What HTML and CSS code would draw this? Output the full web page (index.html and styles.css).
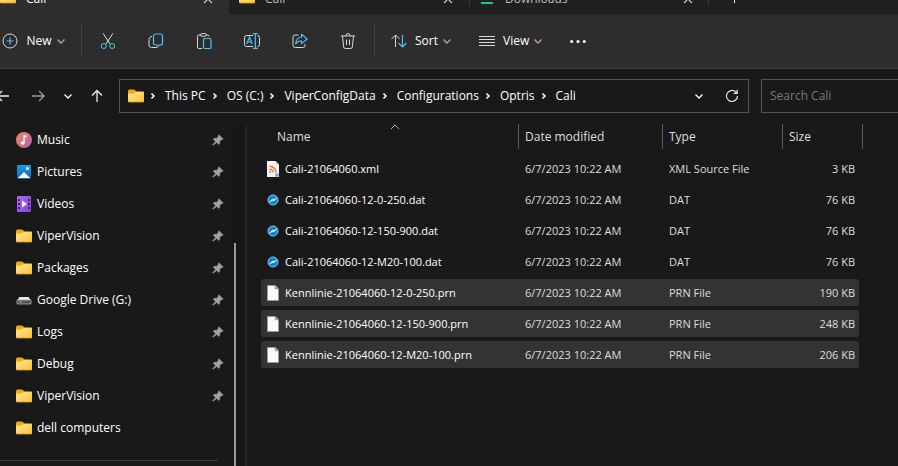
FILE: index.html
```html
<!DOCTYPE html>
<html lang="en">
<head>
<meta charset="utf-8">
<title>Cali</title>
<link rel="stylesheet" href="styles.css">
</head>
<body>
<svg class="sprite" aria-hidden="true">
  <defs>
    <linearGradient id="g-folder" x1="0" y1="0" x2="1" y2="1"><stop offset="0" stop-color="#ffe59a"/><stop offset="1" stop-color="#fdc433"/></linearGradient>
    <linearGradient id="g-music" x1="0" y1="0" x2="1" y2="1"><stop offset="0" stop-color="#f58a56"/><stop offset="1" stop-color="#a960b8"/></linearGradient>
    <linearGradient id="g-pic" x1="0" y1="0" x2="0" y2="1"><stop offset="0" stop-color="#1e9be6"/><stop offset="1" stop-color="#0867b8"/></linearGradient>
    <linearGradient id="g-video" x1="0" y1="0" x2="1" y2="1"><stop offset="0" stop-color="#b565f0"/><stop offset="1" stop-color="#7d45dc"/></linearGradient>
    <symbol id="folder" viewBox="0 0 16 16">
      <path d="M0 3q0-1.500 1.500-1.500h4.500l2 1.500v4H0z" fill="#f5a908"/>
      <path d="M0 5.500h6L8 3.500h7q1 0 1 1V13q0 1-1 1H1q-1 0-1-1z" fill="url(#g-folder)"/>
      <path d="M0 13q0 1 1 1h14q1 0 1-1" fill="none" stroke="#dda020" stroke-width=".8"/>
    </symbol>
    <symbol id="chev-down" viewBox="0 0 10 10"><path d="M1.500 3.500 5 7l3.500-3.500" fill="none" stroke="currentColor" stroke-width="1.300"/></symbol>
    <symbol id="chev-right" viewBox="0 0 6 10"><path d="M1.500 2.500 4 5 1.500 7.500" fill="none" stroke="currentColor" stroke-width="1.600"/></symbol>
    <symbol id="close" viewBox="0 0 10 10"><path d="m1 1 8 8M9 1 1 9" stroke="currentColor" stroke-width="1.200"/></symbol>
    <symbol id="pin" viewBox="0 0 12 12"><path d="M7 .8 11.200 5l-1 .8-.8-.1-1.800 1.800.1 2.100-1 1L4.500 8.400 1.200 11.300l-.6-.6 2.900-3.200L1.300 5.300l1-1 2.100.1 1.800-1.800-.1-.8z" fill="#98a3aa" stroke="#98a3aa" stroke-width=".5"/></symbol>
    <symbol id="page" viewBox="0 0 12 16"><path d="M.5.5h7.800l3.200 3.200v11.800H.5z" fill="#fafafa" stroke="#9b9b9b"/><path d="M8.300.5v3.200h3.200z" fill="#ddd" stroke="#777" stroke-width=".8"/></symbol>
    <symbol id="dat" viewBox="0 0 12 12"><circle cx="6" cy="6" r="5" fill="#0c83cf" stroke="#8bc9ee"/><path d="m2.500 8 3.200-3 .8.800L9.500 4 6.600 7.100l-.9-.8z" fill="#fff" stroke="#fff" stroke-width=".6"/></symbol>
  </defs>
</svg>

<header class="tabs">
  <div class="tab tab-active"><svg class="i16"><use href="#folder"/></svg><span>Cali</span><button class="close" aria-label="Close Cali"><svg class="i10"><use href="#close"/></svg></button></div>
  <div class="tab tab-round"><svg class="i16"><use href="#folder"/></svg><span>Cali</span><button class="close" aria-label="Close Cali"><svg class="i10"><use href="#close"/></svg></button></div>
  <div class="tab tab-split"><svg class="i16" viewBox="0 0 16 16"><path d="M6 0h4v5h4l-6 6-6-6h4z" fill="#14a596"/><path d="M2 14h12" stroke="#1fc596" stroke-width="2"/></svg><span>Downloads</span><button class="close" aria-label="Close Downloads"><svg class="i10"><use href="#close"/></svg></button></div>
  <button class="new-tab" aria-label="New tab"><svg class="i12" viewBox="0 0 12 12"><path d="M6.500 0v12M0 6.500h12" stroke="currentColor"/></svg></button>
</header>

<div class="toolbar" role="toolbar">
  <button class="labelled new"><svg class="i16" viewBox="0 0 16 16" fill="none"><circle cx="8" cy="8" r="7" stroke="#d8d8d8"/><path d="M8 4.500v7M4.500 8h7" stroke="#4cc2ff" stroke-width="1.200"/></svg><span>New</span><svg class="i10 dim"><use href="#chev-down"/></svg></button>
  <span class="rule"></span>
  <button class="tool" aria-label="Cut"><svg class="i16" viewBox="0 0 16 16" fill="none"><path d="m3 .3 7.300 11M13 .3 5.700 11.300" stroke="#d8d8d8"/><circle cx="3.800" cy="13" r="2.500" stroke="#4cc2ff"/><circle cx="12.200" cy="13" r="2.500" stroke="#4cc2ff"/></svg></button>
  <button class="tool" aria-label="Copy"><svg class="i16" viewBox="0 0 16 16" fill="none"><path d="M4 3.500H3q-2 1-2 3V12q0 2.500 2.500 2.500H8q2 0 3-2" stroke="#d8d8d8"/><rect x="5.500" y="1" width="9" height="11" rx="2" stroke="#4cc2ff" stroke-width="1.200"/></svg></button>
  <button class="tool" aria-label="Paste"><svg class="i16" viewBox="0 0 16 16" fill="none"><path d="M4.500 2H2.700q-1.200 0-1.200 1.200v11.100q0 1.200 1.200 1.200H6M10.500 2h1.300Q13 2 13 3.500" stroke="#d8d8d8"/><rect x="4.500" y=".6" width="6" height="2.600" rx="1.300" stroke="#d8d8d8"/><rect x="7.500" y="5.500" width="7.500" height="10" rx="1.200" stroke="#4cc2ff" stroke-width="1.200"/></svg></button>
  <button class="tool" aria-label="Rename"><svg class="i16" viewBox="0 0 16 16" fill="none"><path d="M9 2.500H2.500q-2 0-2 2v7q0 2 2 2H9M13.500 2.500q2 0 2 2v7q0 2-2 2" stroke="#d8d8d8"/><path d="m2.700 11 2.800-6.800L8.300 11M3.700 9h3.600M8.800.6h5M8.800 15.400h5M11.300.6v14.800" stroke="#4cc2ff" stroke-width="1.200"/></svg></button>
  <button class="tool" aria-label="Share"><svg class="i16" viewBox="0 0 16 16" fill="none"><path d="M6.500 2H3.200Q1 2 1 4.200v8.100q0 2.200 2.200 2.200h7.600q2.200 0 2.200-2.200V11" stroke="#d8d8d8"/><path d="M9.500 1.200 15.200 6l-5.700 4.700V8Q6 7.500 3.700 11 4 4.500 9.500 4z" stroke="#4cc2ff" stroke-width="1.100" stroke-linejoin="round"/></svg></button>
  <button class="tool" aria-label="Delete"><svg class="i16" viewBox="0 0 16 16" fill="none" stroke="#d8d8d8"><path d="M.8 3h14.400M2.500 3l1.200 11q.2 1.500 1.600 1.500h5.400q1.400 0 1.600-1.500l1.200-11M5.700 3Q5.700.6 8 .6T10.300 3M6.500 6.500v5.500M9.500 6.500v5.500"/></svg></button>
  <span class="rule"></span>
  <button class="labelled sort"><svg class="i16" viewBox="0 0 16 16" fill="none"><path d="M4.500 14V2M.5 6l4-4 4 4" stroke="#d8d8d8"/><path d="M11.500 2v12M7.500 10l4 4 4-4" stroke="#4cc2ff" stroke-width="1.200"/></svg><span>Sort</span><svg class="i10 dim"><use href="#chev-down"/></svg></button>
  <button class="labelled view"><svg class="i16" viewBox="0 0 16 16"><path d="M0 3.500h16M0 6.500h16M0 9.500h16M0 12.500h16" stroke="#d8d8d8"/></svg><span>View</span><svg class="i10 dim"><use href="#chev-down"/></svg></button>
  <button class="more" aria-label="See more"><svg class="i16" viewBox="0 0 16 16" fill="#fff"><circle cx="1.700" cy="8.500" r="1.500"/><circle cx="8" cy="8.500" r="1.500"/><circle cx="14.300" cy="8.500" r="1.500"/></svg></button>
</div>

<nav class="location">
  <div class="history">
    <button class="back" aria-label="Back"><svg class="i14" viewBox="0 0 14 14"><path d="M13 7H1M6 2 1 7l5 5" fill="none" stroke="#eee" stroke-width="1.300"/></svg></button>
    <button class="forward" aria-label="Forward"><svg class="i14" viewBox="0 0 14 14"><path d="M1 7h12M8 2l5 5-5 5" fill="none" stroke="#999" stroke-width="1.300"/></svg></button>
    <button class="recent" aria-label="Recent locations"><svg class="i10"><use href="#chev-down"/></svg></button>
    <button class="up" aria-label="Up"><svg class="i14" viewBox="0 0 14 14"><path d="M7 13V1.500M2 6.500l5-5 5 5" fill="none" stroke="#eee" stroke-width="1.300"/></svg></button>
  </div>
  <div class="address">
    <svg class="i16"><use href="#folder"/></svg>
    <ol class="crumbs">
      <li><svg class="sep"><use href="#chev-right"/></svg><a href="#">This PC</a></li>
      <li><svg class="sep"><use href="#chev-right"/></svg><a href="#">OS (C:)</a></li>
      <li><svg class="sep"><use href="#chev-right"/></svg><a href="#">ViperConfigData</a></li>
      <li><svg class="sep"><use href="#chev-right"/></svg><a href="#">Configurations</a></li>
      <li><svg class="sep"><use href="#chev-right"/></svg><a href="#">Optris</a></li>
      <li><svg class="sep"><use href="#chev-right"/></svg><a href="#">Cali</a></li>
    </ol>
    <button class="addr-btn" aria-label="Previous locations"><svg class="i10"><use href="#chev-down"/></svg></button>
    <button class="addr-btn" aria-label="Refresh"><svg class="i14" viewBox="0 0 14 14" fill="none" stroke="#e6e6e6" stroke-width="1.200"><path d="M12.500 7A5.500 5.500 0 1 1 10.800 3L12 4.200M12.200.8v3.600H8.600"/></svg></button>
  </div>
  <div class="search">
    <input type="search" placeholder="Search Cali" aria-label="Search Cali">
    <svg class="i12" viewBox="0 0 12 12" fill="none" stroke="#ddd"><circle cx="7" cy="5" r="4"/><path d="M4 8 .5 11.500"/></svg>
  </div>
</nav>

<div class="body">
  <aside class="sidebar">
    <ul class="places">
      <li><svg class="i16" viewBox="0 0 16 16"><circle cx="8" cy="8" r="8" fill="url(#g-music)"/><ellipse cx="6.600" cy="11" rx="2" ry="1.700" fill="#fff"/><path d="M7.500 11V3.200h3v2H8.700V11z" fill="#fff"/></svg><a href="#">Music</a><svg class="pin"><use href="#pin"/></svg></li>
      <li><svg class="i16" viewBox="0 0 16 16"><rect x="1" y="1" width="14" height="14" rx="1" fill="url(#g-pic)"/><path d="M2 14l6-6 6 6z" fill="#fff"/><circle cx="11.500" cy="4.500" r="1.500" fill="#dff1ff"/></svg><a href="#">Pictures</a><svg class="pin"><use href="#pin"/></svg></li>
      <li><svg class="i16" viewBox="0 0 16 16"><rect x="1" width="14" height="16" rx="1" fill="url(#g-video)"/><path d="M2 3h2v2H2zm0 4h2v2H2zm0 4h2v2H2zm10-8h2v2h-2zm0 4h2v2h-2zm0 4h2v2h-2z" fill="#3d2470"/><path d="m6 4.500 5 3.500-5 3.500z" fill="#fff"/></svg><a href="#">Videos</a><svg class="pin"><use href="#pin"/></svg></li>
      <li><svg class="i16"><use href="#folder"/></svg><a href="#">ViperVision</a><svg class="pin"><use href="#pin"/></svg></li>
      <li><svg class="i16"><use href="#folder"/></svg><a href="#">Packages</a><svg class="pin"><use href="#pin"/></svg></li>
      <li><svg class="i16" viewBox="0 0 16 16"><path d="M3.500 5h9L15 8.500H1z" fill="#e8e8e8"/><path d="M1 8h14v4H1z" fill="#555" stroke="#aaa" stroke-width=".8"/><path d="M3.500 10h2" stroke="#4be04b" stroke-width="1.500"/></svg><a href="#">Google Drive (G:)</a><svg class="pin"><use href="#pin"/></svg></li>
      <li><svg class="i16"><use href="#folder"/></svg><a href="#">Logs</a><svg class="pin"><use href="#pin"/></svg></li>
      <li><svg class="i16"><use href="#folder"/></svg><a href="#">Debug</a><svg class="pin"><use href="#pin"/></svg></li>
      <li><svg class="i16"><use href="#folder"/></svg><a href="#">ViperVision</a><svg class="pin"><use href="#pin"/></svg></li>
      <li><svg class="i16"><use href="#folder"/></svg><a href="#">dell computers</a></li>
    </ul>
    <div class="track"><div class="thumb"></div></div>
  </aside>
  <main class="files">
    <table>
      <colgroup><col><col class="c-date"><col class="c-type"><col class="c-size"></colgroup>
      <thead>
        <tr>
          <th><button class="name-head">Name<svg class="asc" viewBox="0 0 10 6"><path d="M1 5l4-4 4 4" fill="none" stroke="#aaa"/></svg></button></th>
          <th><button>Date modified</button></th>
          <th><button>Type</button></th>
          <th><button class="size-head">Size</button></th>
        </tr>
      </thead>
      <tbody>
        <tr><td><div class="name"><svg class="file" viewBox="0 0 12 16"><path d="M0 0h8.500L12 3.500V16H0z" fill="#f6f4f2"/><path d="M8.500 0v3.500H12z" fill="#ccc"/><g fill="none" stroke="#d97a45" stroke-width="1.400"><path d="M2.500 5.200q6 .3 6.500 6.300M2.500 8q3.400.3 3.700 3.500"/></g><circle cx="3.200" cy="10.800" r="1" fill="#d97a45"/><circle cx="10" cy="14" r="2" fill="#79a9e8"/></svg>Cali-21064060.xml</div></td><td>6/7/2023 10:22 AM</td><td>XML Source File</td><td>3 KB</td></tr>
        <tr><td><div class="name"><svg class="i12"><use href="#dat"/></svg>Cali-21064060-12-0-250.dat</div></td><td>6/7/2023 10:22 AM</td><td>DAT</td><td>76 KB</td></tr>
        <tr><td><div class="name"><svg class="i12"><use href="#dat"/></svg>Cali-21064060-12-150-900.dat</div></td><td>6/7/2023 10:22 AM</td><td>DAT</td><td>76 KB</td></tr>
        <tr><td><div class="name"><svg class="i12"><use href="#dat"/></svg>Cali-21064060-12-M20-100.dat</div></td><td>6/7/2023 10:22 AM</td><td>DAT</td><td>76 KB</td></tr>
        <tr class="selected"><td><div class="name"><svg class="file"><use href="#page"/></svg>Kennlinie-21064060-12-0-250.prn</div></td><td>6/7/2023 10:22 AM</td><td>PRN File</td><td>190 KB</td></tr>
        <tr class="selected"><td><div class="name"><svg class="file"><use href="#page"/></svg>Kennlinie-21064060-12-150-900.prn</div></td><td>6/7/2023 10:22 AM</td><td>PRN File</td><td>248 KB</td></tr>
        <tr class="selected"><td><div class="name"><svg class="file"><use href="#page"/></svg>Kennlinie-21064060-12-M20-100.prn</div></td><td>6/7/2023 10:22 AM</td><td>PRN File</td><td>206 KB</td></tr>
      </tbody>
    </table>
  </main>
</div>
</body>
</html>
```
FILE: styles.css
```css
* { box-sizing: border-box; }
body {
  margin: 0;
  height: 100vh;
  display: flex;
  flex-direction: column;
  overflow: hidden;
  background: #191919;
  color: #fff;
  font: 12px/16px "Open Sans", "Noto Sans", sans-serif;
}
button {
  display: flex;
  align-items: center;
  justify-content: center;
  padding: 0;
  border: 0;
  background: none;
  color: inherit;
  font: inherit;
}
a { color: inherit; text-decoration: none; }
ul, ol { margin: 0; padding: 0; list-style: none; }
svg { display: block; flex: none; }
.sprite { position: absolute; width: 0; height: 0; }
.i16 { width: 16px; height: 16px; }
.i14 { width: 14px; height: 14px; }
.i12 { width: 12px; height: 12px; }
.i10 { width: 10px; height: 10px; }
.dim { color: #aaa; }

/* Tab strip, scrolled mostly out of view */
.tabs {
  flex: none;
  display: flex;
  align-items: flex-end;
  height: 14px;
  overflow: hidden;
  background: #2d2d2d;
}
.tab {
  flex: none;
  display: flex;
  align-items: center;
  gap: 10px;
  width: 240px;
  height: 30px;
  padding: 0 16px 0 10px;
  background: #202020;
  border-bottom: 1px solid #1c1c1c;
  color: #bbb;
}
.tab .i16 { margin-bottom: 4px; }
.tab-active {
  width: 229px;
  padding-left: 0;
  background: #2d2d2d;
  border-color: #2d2d2d;
  color: #fff;
}
.tab-round { border-bottom-left-radius: 4px; }
/* Short dividers that stop above the strip's lower edge */
.tab-split {
  background:
    linear-gradient(#3a3a3a, #3a3a3a) left top / 1px 22px no-repeat,
    linear-gradient(#3a3a3a, #3a3a3a) right top / 1px 22px no-repeat,
    #202020;
}
.close { margin-left: auto; color: #ccc; }
.new-tab {
  flex: 1;
  justify-content: flex-start;
  height: 30px;
  padding: 0 0 4px 19px;
  background: #202020;
  border-bottom: 1px solid #1c1c1c;
}

.toolbar {
  flex: none;
  display: flex;
  align-items: center;
  height: 55px;
  background: #2d2d2d;
  border-bottom: 1px solid #3c3c3c;
}
.labelled { gap: 8px; height: 32px; }
.labelled .dim { margin-left: -4px; }
.new { width: 68px; }
.tool { width: 48px; height: 32px; }
.rule { width: 1px; height: 32px; margin: 0 2px 0 13px; background: #444; }
.tool + .rule { margin: 0 16px 0 2px; }
.view { margin-left: 27px; }
.more { margin-left: 27px; }

.location {
  flex: none;
  display: flex;
  align-items: center;
  height: 55px;
  padding-bottom: 2px;
  overflow: hidden;
}
.history { display: flex; width: 119px; }
.back { margin-left: -4px; }
.forward { margin-left: 21px; }
.recent { margin-left: 18px; }
.up { margin-left: 17px; }
.address {
  flex: 1;
  display: flex;
  align-items: center;
  height: 34px;
  padding-left: 8px;
  border: 1px solid #535353;
}
.crumbs { flex: 1; display: flex; padding-left: 6px; }
.crumbs li { display: flex; align-items: center; }
.crumbs li + li { margin-left: 6px; }
.sep { width: 6px; height: 10px; margin-right: 9px; }
.addr-btn { width: 33px; height: 32px; }
.search {
  flex: none;
  display: flex;
  align-items: center;
  width: 150px;
  height: 34px;
  margin: 0 -13px 0 12px;
  border: 1px solid #535353;
}
.search input {
  flex: 1;
  min-width: 0;
  padding: 0 8px;
  border: 0;
  background: none;
  color: #fff;
  font: inherit;
}
.search input::placeholder { color: #787878; opacity: 1; }

.body { flex: 1; display: flex; min-height: 0; }
.sidebar {
  flex: none;
  display: flex;
  width: 247px;
  border-right: 2px solid #242424;
}
.places {
  flex: 1;
  align-self: flex-start;
  margin-right: 8px;
  padding-bottom: 16px;
  border-bottom: 1px solid #3c3c3c;
}
.places li {
  display: flex;
  align-items: center;
  gap: 5px;
  height: 32px;
  padding-left: 16px;
}
.places a { flex: 1; }
.pin { width: 12px; height: 12px; margin-right: -6px; }
.track { width: 19px; padding: 119px 0 0 8px; background: #171717; }
.thumb { width: 2px; height: 100%; background: #9a9a9a; }

.files { flex: 1; padding: 0 39px 0 14px; }
table { width: 100%; table-layout: fixed; border-spacing: 0; color: #dedede; }
tbody { font-size: 11px; }
.c-date { width: 144px; }
.c-type { width: 120px; }
.c-size { width: 76px; }
th { height: 29px; padding: 0; vertical-align: top; font-weight: 400; }
th button {
  position: relative;
  justify-content: flex-start;
  width: 100%;
  height: 25px;
  padding-left: 6px;
  border-right: 1px solid #5c5c5c;
}
th .name-head { padding-left: 16px; }
th .size-head { width: 80px; }
.asc { position: absolute; top: 0; left: 50%; width: 10px; height: 6px; }
td {
  height: 31px;
  padding: 0 0 0 6px;
  border: solid transparent;
  border-width: 2px 0;
  background-clip: padding-box;
}
td:first-child { padding-left: 6px; color: #fff; }
td:last-child { padding: 0 4px 0 0; text-align: right; }
.name { display: flex; align-items: center; gap: 6px; }
.file { width: 12px; height: 16px; }
.selected td { background-color: #333; }
.selected td:first-child { border-radius: 4px 0 0 4px; }
.selected td:last-child { border-radius: 0 4px 4px 0; }
```
